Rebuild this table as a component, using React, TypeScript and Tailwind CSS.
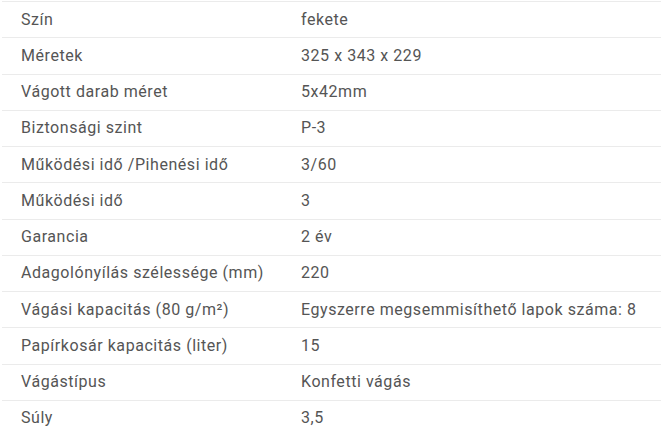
import React from "react";

const rows: [string, string][] = [
  ["Szín", "fekete"],
  ["Méretek", "325 x 343 x 229"],
  ["Vágott darab méret", "5x42mm"],
  ["Biztonsági szint", "P-3"],
  ["Működési idő /Pihenési idő", "3/60"],
  ["Működési idő", "3"],
  ["Garancia", "2 év"],
  ["Adagolónyílás szélessége (mm)", "220"],
  ["Vágási kapacitás (80 g/m²)", "Egyszerre megsemmisíthető lapok száma: 8"],
  ["Papírkosár kapacitás (liter)", "15"],
  ["Vágástípus", "Konfetti vágás"],
  ["Súly", "3,5"],
];

export default function App() {
  return (
    <div className="w-[663px] h-[441px] bg-white pt-[1px] px-[2px] overflow-hidden">
      <div className="flex flex-col w-[659px]">
        {rows.map(([k, v], i) => (
          <div
            key={i}
            className="flex h-[36.25px] items-center border-t border-[#ebebeb] text-[16px] tracking-[0.55px] text-[#555555]"
            style={{ fontFamily: "Roboto, sans-serif" }}
          >
            <div className="w-[280px] pl-[19px]">{k}</div>
            <div className="flex-1 pl-[19px]">{v}</div>
          </div>
        ))}
      </div>
    </div>
  );
}
